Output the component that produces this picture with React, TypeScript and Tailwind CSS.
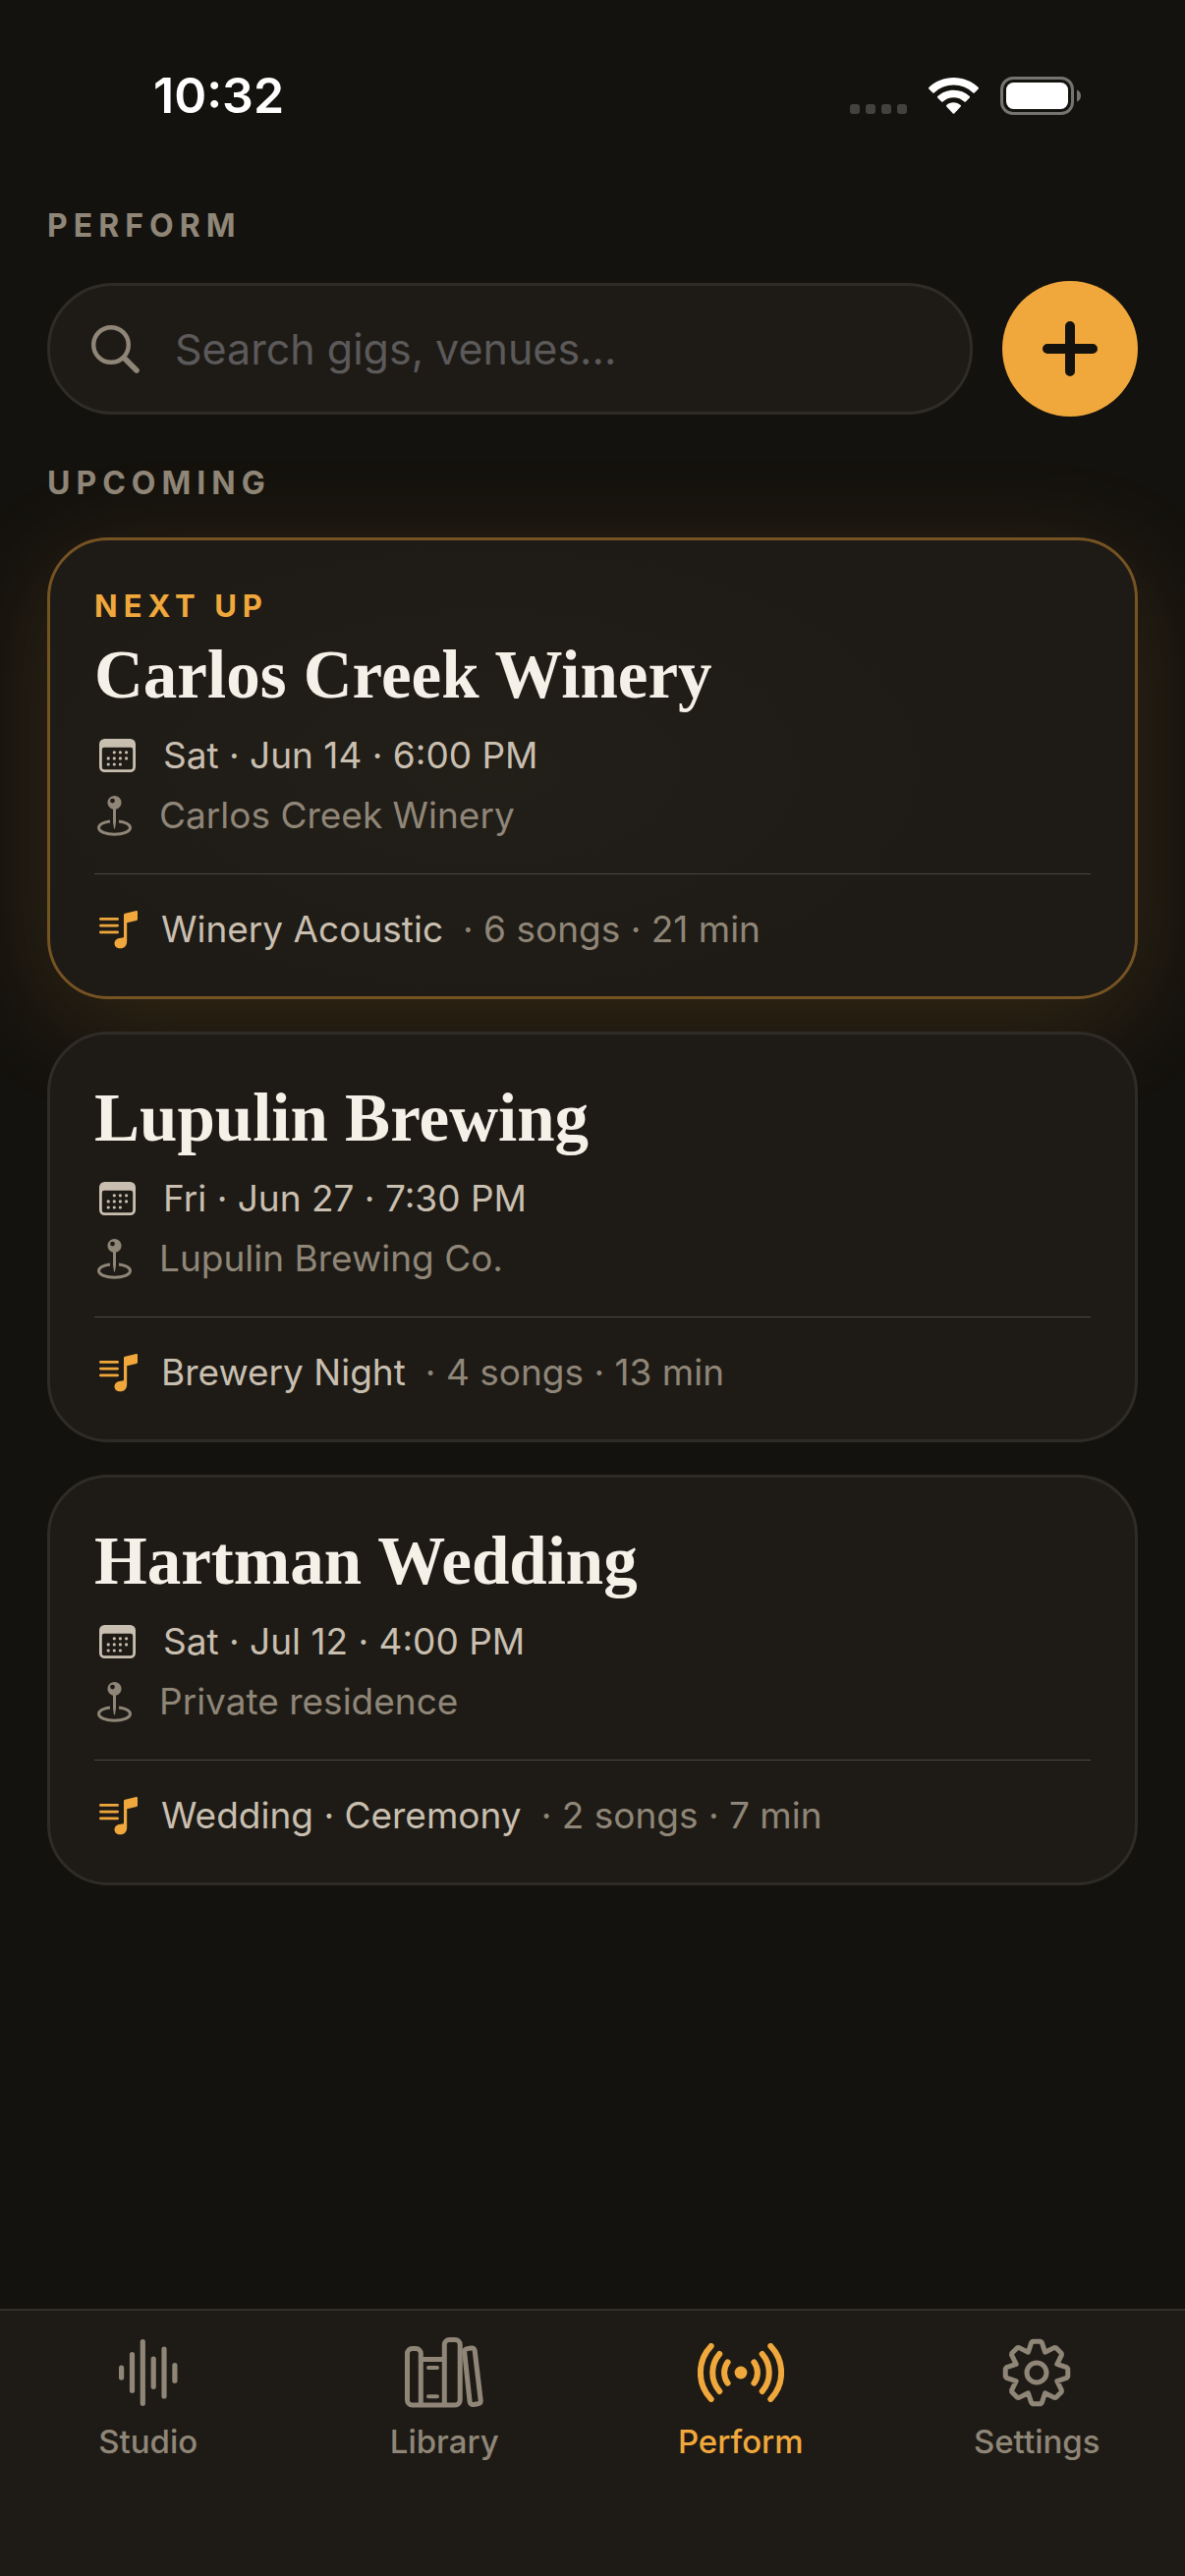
import React, { useState } from "react";

type Gig = {
  id: number;
  title: string;
  date: string;
  venue: string;
  setlist: string;
  summary: string;
};

const gigs: Gig[] = [
  {
    id: 1,
    title: "Carlos Creek Winery",
    date: "Sat · Jun 14 · 6:00 PM",
    venue: "Carlos Creek Winery",
    setlist: "Winery Acoustic",
    summary: "· 6 songs · 21 min",
  },
  {
    id: 2,
    title: "Lupulin Brewing",
    date: "Fri · Jun 27 · 7:30 PM",
    venue: "Lupulin Brewing Co.",
    setlist: "Brewery Night",
    summary: "· 4 songs · 13 min",
  },
  {
    id: 3,
    title: "Hartman Wedding",
    date: "Sat · Jul 12 · 4:00 PM",
    venue: "Private residence",
    setlist: "Wedding · Ceremony",
    summary: "· 2 songs · 7 min",
  },
];

// Eight teeth, each one a valley point followed by the outer corners
const gearPoints = Array.from({ length: 8 }, (_, i) => {
  const at = (deg: number, r: number) => {
    const a = ((i * 45 + deg) * Math.PI) / 180;
    return `${(35 + r * Math.sin(a)).toFixed(2)},${(35 - r * Math.cos(a)).toFixed(2)}`;
  };
  return [at(-22.5, 22.5), at(-10, 31), at(-7, 32), at(7, 32), at(10, 31)].join(" ");
}).join(" ");

const WifiIcon = () => (
  <svg width="51" height="37" viewBox="0 0 51 37" fill="white" aria-hidden="true">
    <path d="M25.5 0C15.7 0 6.8 3.8.3 10c-.4.4-.4 1 0 1.4l4 4.1c.4.4 1 .4 1.4 0a28.5 28.5 0 0 1 39.6 0c.4.4 1 .4 1.4 0l4-4.1c.4-.4.4-1 0-1.4C44.2 3.8 35.3 0 25.5 0z" />
    <path d="M25.5 12.7c-6.3 0-12 2.4-16.3 6.3-.4.4-.4 1 0 1.4l4 4.1c.4.4 1 .4 1.4 0a16 16 0 0 1 21.8 0c.4.4 1 .4 1.4 0l4-4.1c.4-.4.4-1 0-1.4a24 24 0 0 0-16.3-6.3z" />
    <path d="M25.5 25.3c-2.8 0-5.3 1-7.2 2.7-.4.4-.4 1 0 1.4l6.5 7.1c.4.4 1 .4 1.4 0l6.5-7.1c.4-.4.4-1 0-1.4a10.8 10.8 0 0 0-7.2-2.7z" />
  </svg>
);

const BatteryIcon = () => (
  <svg width="82" height="39" viewBox="0 0 82 39" aria-hidden="true">
    <rect x="1.5" y="1.5" width="72" height="36" rx="11.5" fill="none" stroke="#757470" strokeWidth="3" />
    <rect x="6" y="6" width="63" height="27" rx="7.5" fill="white" />
    <path d="M78 13.5c2.5 1 4 3.3 4 6s-1.5 5-4 6z" fill="#757470" />
  </svg>
);

const SearchIcon = () => (
  <svg
    width="49"
    height="49"
    viewBox="0 0 49 49"
    fill="none"
    stroke="#8f8678"
    strokeLinecap="round"
    className="shrink-0"
    aria-hidden="true"
  >
    <circle cx="20" cy="20" r="17.8" strokeWidth="4.4" />
    <path d="M33.5 33.5 46 46" strokeWidth="5.6" />
  </svg>
);

const PlusIcon = () => (
  <svg width="56" height="56" viewBox="0 0 56 56" stroke="#14120e" strokeWidth="10" strokeLinecap="round" aria-hidden="true">
    <path d="M28 5v46M5 28h46" />
  </svg>
);

const CalendarIcon = () => (
  <svg width="37" height="34" viewBox="0 0 37 34" fill="#c9bfb0" className="shrink-0" aria-hidden="true">
    <path
      fillRule="evenodd"
      d="M5.5 0h26A5.5 5.5 0 0 1 37 5.5v23a5.5 5.5 0 0 1-5.5 5.5h-26A5.5 5.5 0 0 1 0 28.5v-23A5.5 5.5 0 0 1 5.5 0zM5 8.8a2.2 2.2 0 0 0-2.2 2.2v18A2.2 2.2 0 0 0 5 31.2h27a2.2 2.2 0 0 0 2.2-2.2V11A2.2 2.2 0 0 0 32 8.8z"
    />
    <circle cx="15.3" cy="13.8" r="1.6" />
    <circle cx="21.4" cy="13.8" r="1.6" />
    <circle cx="27.6" cy="13.8" r="1.6" />
    <circle cx="9.2" cy="19.9" r="1.6" />
    <circle cx="15.3" cy="19.9" r="1.6" />
    <circle cx="21.4" cy="19.9" r="1.6" />
    <circle cx="27.6" cy="19.9" r="1.6" />
    <circle cx="9.2" cy="26" r="1.6" />
    <circle cx="15.3" cy="26" r="1.6" />
    <circle cx="21.4" cy="26" r="1.6" />
  </svg>
);

const PinIcon = () => (
  <svg width="35" height="41" viewBox="0 0 35 41" className="shrink-0" aria-hidden="true">
    <path
      fill="#8f8678"
      fillRule="evenodd"
      d="M17.5 0a7 7 0 0 1 1.5 13.85V27l-1 6.3c-.1.6-.9.6-1 0L16 27V13.85A7 7 0 0 1 17.5 0zm-2 2.7a2.4 2.4 0 1 0 0 4.8 2.4 2.4 0 0 0 0-4.8z"
    />
    <path
      d="M13 26C6.5 26.7 1.5 29.2 1.5 32.5c0 3.8 7.2 6.7 16 6.7s16-2.9 16-6.7c0-3.3-5-5.8-11.5-6.5"
      fill="none"
      stroke="#8f8678"
      strokeWidth="3"
    />
  </svg>
);

const SetlistIcon = () => (
  <svg width="39" height="39" viewBox="0 0 39 39" fill="#f0a83c" className="shrink-0" aria-hidden="true">
    <path d="M1.4 8.4h17.2M1.4 15.1h17.2M1.4 21.9h17.2" stroke="#f0a83c" strokeWidth="2.8" strokeLinecap="round" />
    <path d="M25 4.3c0-.8.5-1.4 1.3-1.6L37.7.1c.8-.2 1.3.2 1.3 1v7.4c0 .7-.4 1.2-1.1 1.4l-9.7 2.3V31c0 4.5-2.5 7.3-6.8 7.3-3.5 0-5.9-2-5.9-5 0-3.2 2.5-5.3 6.2-5.6l1.7-.1c1.1-.1 1.6-.6 1.6-1.7z" />
  </svg>
);

const StudioIcon = () => (
  <svg width="60" height="68" viewBox="0 0 60 68" stroke="currentColor" strokeWidth="5.2" strokeLinecap="round" aria-hidden="true">
    <path d="M2.6 29v10M13.5 15.7v36.5M24.3 2.7v62.5M35.2 20v28.3M46 10v48M56.9 26.5v15.7" />
  </svg>
);

const LibraryIcon = () => (
  <svg
    width="80"
    height="72"
    viewBox="0 0 80 72"
    fill="none"
    stroke="currentColor"
    strokeWidth="5"
    strokeLinecap="round"
    strokeLinejoin="round"
    aria-hidden="true"
  >
    <path d="M16.3 69V16.5a5 5 0 0 0-5-5H7.5a5 5 0 0 0-5 5V64a5 5 0 0 0 5 5h43.7a5 5 0 0 0 5-5V7.5a5 5 0 0 0-5-5h-5.9a5 5 0 0 0-5 5V69" />
    <path d="M17.5 22.5h21.5" />
    <path d="M24 31h9M24 60.3h9" strokeWidth="4" />
    <path d="M60.7 15.2c-.2-2 .9-3.3 2.8-3.6l4-.6c2.1-.3 3.5.7 3.7 2.9l6 50.2c.2 2-.8 3.3-2.8 3.6l-4.4.8c-2.1.3-3.7-.8-3.9-2.9z" />
  </svg>
);

const PerformIcon = () => (
  <svg width="88" height="60" viewBox="0 0 88 60" fill="none" stroke="currentColor" strokeWidth="6" strokeLinecap="round" aria-hidden="true">
    <circle cx="44" cy="30" r="6.4" fill="currentColor" stroke="none" />
    <path d="M13.7 3a39 39 0 0 0 0 54M22.3 11a29 29 0 0 0 0 38M30.6 19.3a18 18 0 0 0 0 21.4" />
    <path d="M74.3 3a39 39 0 0 1 0 54M65.7 11a29 29 0 0 1 0 38M57.4 19.3a18 18 0 0 1 0 21.4" />
  </svg>
);

const SettingsIcon = () => (
  <svg width="70" height="70" viewBox="0 0 70 70" fill="none" stroke="currentColor" strokeWidth="5" strokeLinejoin="round" aria-hidden="true">
    <polygon points={gearPoints} />
    <circle cx="35" cy="35" r="10" />
  </svg>
);

const tabs = [
  { name: "Studio", Icon: StudioIcon },
  { name: "Library", Icon: LibraryIcon },
  { name: "Perform", Icon: PerformIcon },
  { name: "Settings", Icon: SettingsIcon },
];

const GigCard: React.FC<{ gig: Gig; next: boolean }> = ({ gig, next }) => (
  <article
    className={`relative rounded-[62px] border-[3px] bg-[#1e1b16] px-[45px] pt-[47px] pb-11 ${
      next
        ? "border-[#765323] bg-[radial-gradient(ellipse_50%_60%_at_40%_50%,#221e18,#1e1b16)] shadow-[0_24px_110px_rgba(240,168,60,0.15)]"
        : "border-[#2f2c28]"
    }`}
  >
    {next && (
      <p className="mb-3 text-[31px] leading-[40px] font-bold tracking-[6px] text-[#f0a83c]">
        NEXT UP
      </p>
    )}
    <h3 className="font-['Liberation_Serif',serif] text-[69px] leading-[76px] font-bold text-[#f5f1e8]">
      {gig.title}
    </h3>
    <div className="mt-5 flex items-center gap-7 pl-[5px] text-[37px] leading-[48px] text-[#c9bfb0]">
      <CalendarIcon />
      <span>{gig.date}</span>
    </div>
    <div className="mt-[13px] flex items-center gap-7 pl-[3px] text-[37px] leading-[48px] text-[#8f8678]">
      <PinIcon />
      <span>{gig.venue}</span>
    </div>
    <hr className="mt-[35px] border-t border-[#4a4742]" />
    <div className="mt-8 flex items-center gap-6 pl-[5px] text-[37px] leading-[48px]">
      <SetlistIcon />
      <p className="flex gap-5">
        <span className="text-[#c9bfb0]">{gig.setlist}</span>
        <span className="text-[#8f8678]">{gig.summary}</span>
      </p>
    </div>
  </article>
);

const App: React.FC = () => {
  const [query, setQuery] = useState("");
  const [activeTab, setActiveTab] = useState("Perform");

  const visible = gigs.filter((g) =>
    `${g.title} ${g.venue}`.toLowerCase().includes(query.toLowerCase())
  );

  return (
    <div className="flex min-h-screen flex-col bg-[#14120e] font-['Inter',sans-serif]">
      {/* Status bar */}
      <div className="flex items-center justify-between pt-[67px] pr-[106px] pl-[156px]">
        <span className="text-[50px] leading-[60px] font-semibold text-white">10:32</span>
        <div className="flex items-center">
          <div className="mr-[22px] flex gap-[6px] pt-[27px]">
            <span className="size-[10px] rounded-[3px] bg-[#43423e]" />
            <span className="size-[10px] rounded-[3px] bg-[#43423e]" />
            <span className="size-[10px] rounded-[3px] bg-[#43423e]" />
            <span className="size-[10px] rounded-[3px] bg-[#43423e]" />
          </div>
          <div className="mr-[22px]">
            <WifiIcon />
          </div>
          <BatteryIcon />
        </div>
      </div>

      <main className="px-12 pt-[83px] pb-12">
        <h1 className="text-[32px] leading-[40px] font-bold tracking-[6px] text-[#8f8678]">PERFORM</h1>

        {/* Search */}
        <div className="mt-9 flex items-center gap-[30px]">
          <label className="flex h-[134px] flex-1 items-center gap-9 rounded-full border-[3px] border-[#2f2c28] bg-[#1e1b16] pr-12 pl-[42px]">
            <SearchIcon />
            <input
              type="text"
              aria-label="Search gigs and venues"
              placeholder="Search gigs, venues..."
              value={query}
              onChange={(e) => setQuery(e.target.value)}
              className="min-w-0 flex-1 bg-transparent text-[43px] leading-[56px] text-[#f5f1e8] outline-none placeholder:text-[#5b595a]"
            />
          </label>
          <button
            type="button"
            aria-label="Add gig"
            className="flex size-[138px] items-center justify-center rounded-full bg-[#f0a83c]"
          >
            <PlusIcon />
          </button>
        </div>

        <h2 className="mt-12 text-[32px] leading-[40px] font-bold tracking-[6px] text-[#8f8678]">UPCOMING</h2>

        <div className="mt-[35px] flex flex-col gap-[33px]">
          {visible.map((gig) => (
            <GigCard key={gig.id} gig={gig} next={gig.id === 1} />
          ))}
        </div>
      </main>

      {/* Tab bar */}
      <nav className="mt-auto grid grid-cols-4 border-t-2 border-[#33302c] bg-[#1e1b16] pt-[27px] pb-[117px]">
        {tabs.map(({ name, Icon }) => (
          <button
            key={name}
            type="button"
            onClick={() => setActiveTab(name)}
            className={`flex flex-col items-center gap-[14px] ${
              activeTab === name ? "text-[#f0a83c]" : "text-[#8f8678]"
            }`}
          >
            <span className="flex h-[72px] items-center">
              <Icon />
            </span>
            <span className="text-[33px] leading-[40px] font-medium">{name}</span>
          </button>
        ))}
      </nav>
    </div>
  );
};

export default App;
